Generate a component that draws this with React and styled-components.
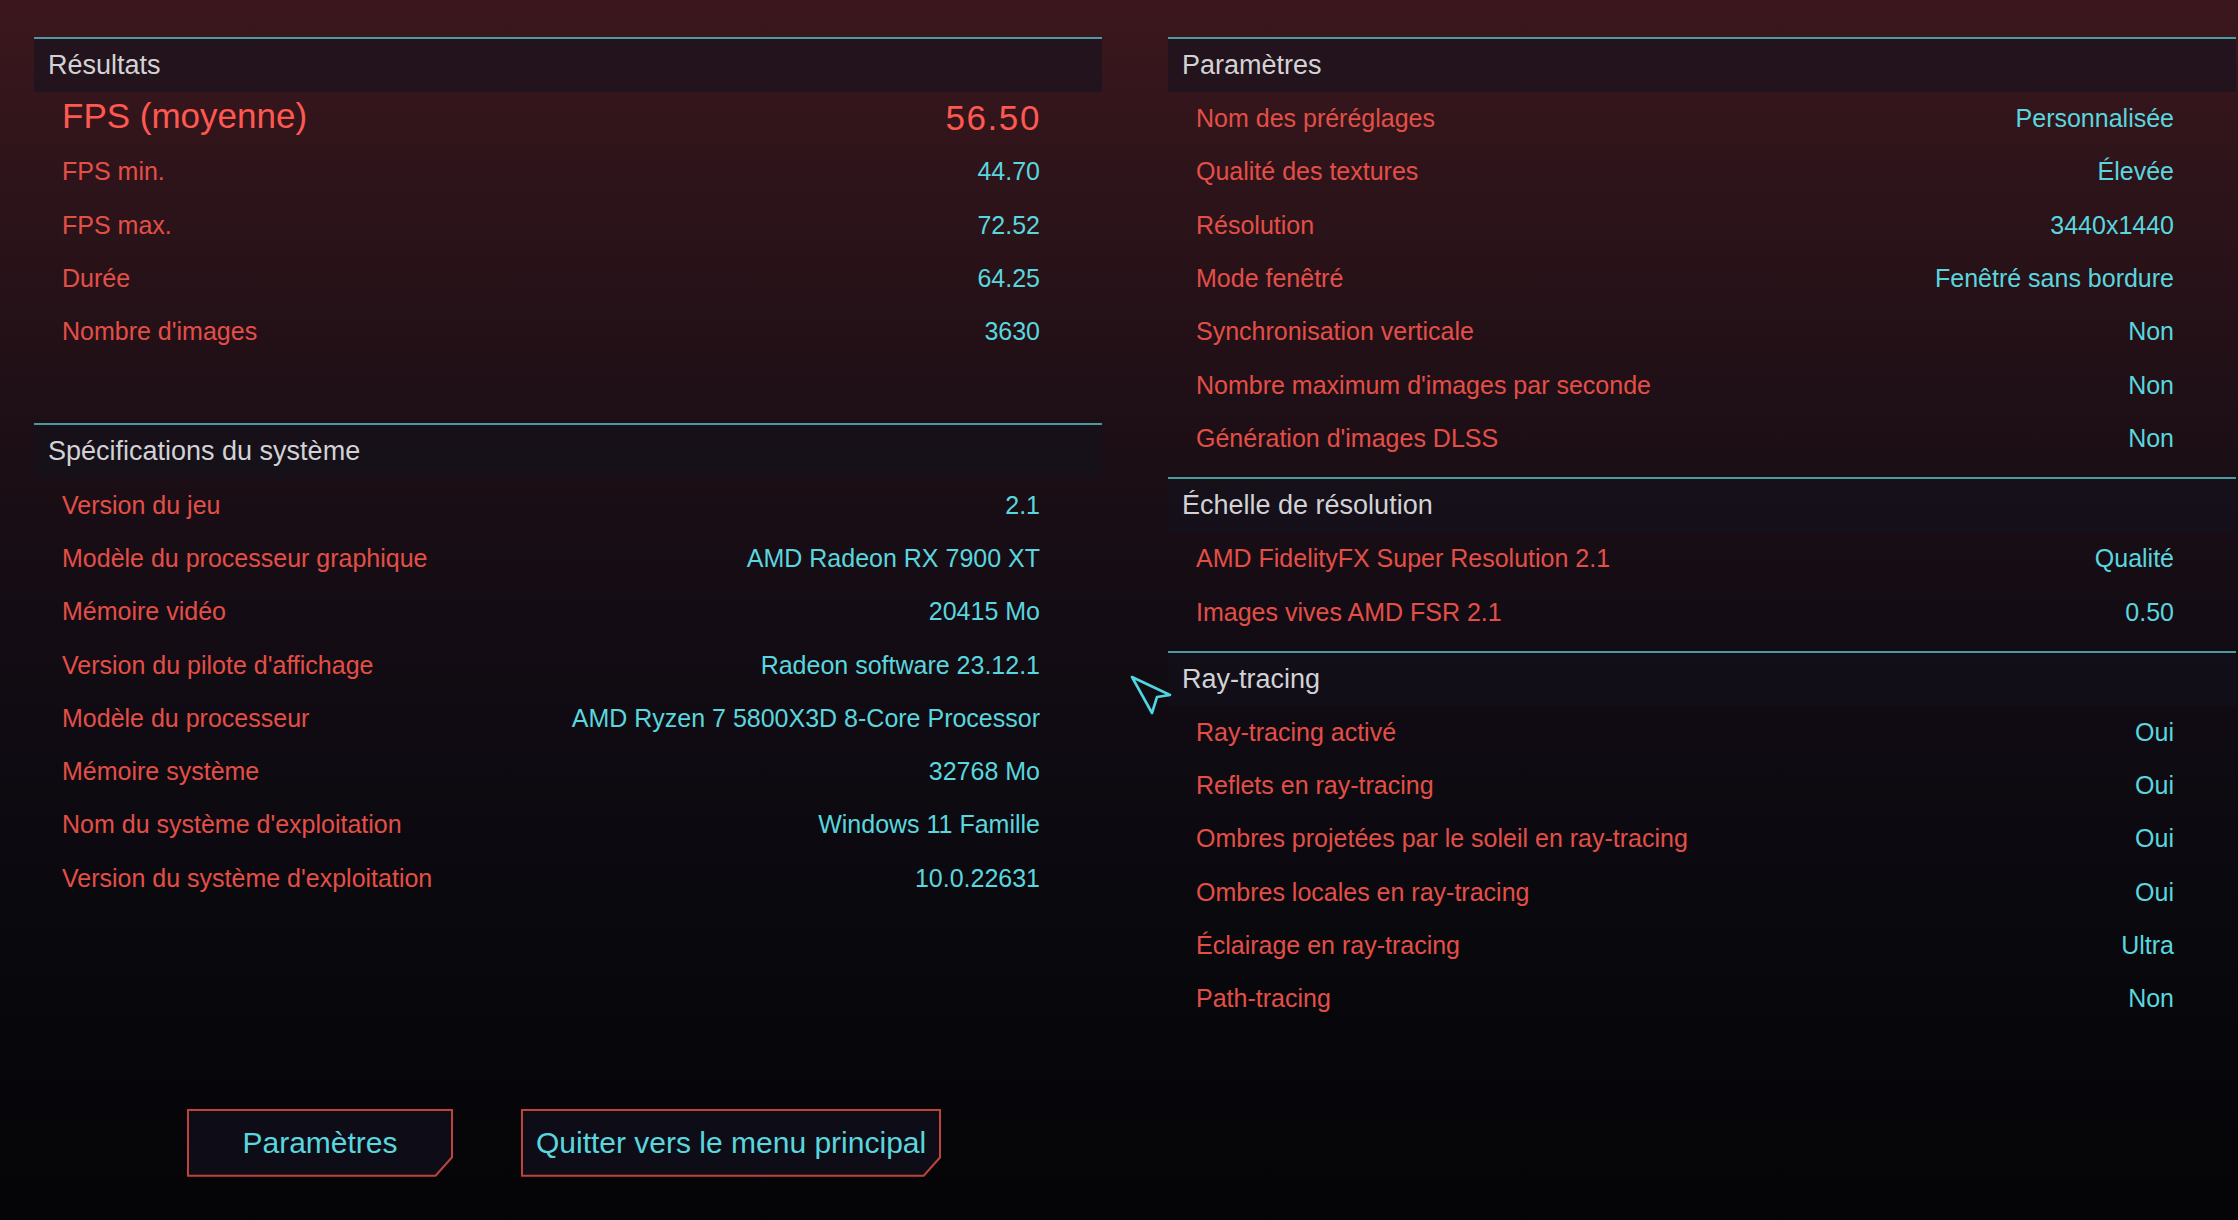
import React from "react";
import styled, { createGlobalStyle } from "styled-components";

const GlobalStyle = createGlobalStyle`
  html, body {
    margin: 0;
    padding: 0;
    width: 2238px;
    height: 1220px;
    overflow: hidden;
    background: linear-gradient(180deg, #3b171d 0%, #2e141a 14%, #1f0f16 33%, #140c14 50%, #0c0a10 68%, #07070b 85%, #050508 100%);
    font-family: "Liberation Sans", Arial, sans-serif;
  }
  * { box-sizing: border-box; }
`;

const Page = styled.div`
  position: relative;
  width: 2238px;
  height: 1220px;
  padding: 37px 2px 0 34px;
  display: grid;
  grid-template-columns: 1068px 1068px;
  column-gap: 66px;
  align-items: start;
`;

const Column = styled.div`
  display: flex;
  flex-direction: column;
`;

const Section = styled.section`
  border-top: 2px solid #4a9aa0;
  padding-bottom: ${(p) => p.$pb || 0}px;
`;

const SectionHeader = styled.div`
  height: 53px;
  display: flex;
  align-items: center;
  padding-left: 14px;
  background: rgba(18, 18, 30, 0.55);
  color: #d2d2d5;
  font-size: 27px;
`;

const Row = styled.div`
  height: 53.3px;
  display: flex;
  align-items: center;
  justify-content: space-between;
  padding: 0 62px 0 28px;
  font-size: 25px;
`;

const Label = styled.span`
  color: ${(p) => (p.$big ? "#ff5850" : "#e34f47")};
  font-size: ${(p) => (p.$big ? "35px" : "inherit")};
  ${(p) => (p.$big ? "margin-top: -6px;" : "")}
`;

const Value = styled.span`
  color: ${(p) => (p.$big ? "#ff5850" : "#5ad6df")};
  font-size: ${(p) => (p.$big ? "35px" : "inherit")};
  letter-spacing: ${(p) => (p.$big ? "1.6px" : "0")};
  ${(p) => (p.$big ? "margin-top: -2px; margin-right: -1px;" : "")}
`;

const Buttons = styled.div`
  display: flex;
  gap: 68px;
  margin-top: 204px;
  padding-left: 153px;
`;

const ButtonFrame = styled.div`
  padding: 2px;
  background: #bd433b;
  clip-path: polygon(0 0, 100% 0, 100% calc(100% - 19px), calc(100% - 17px) 100%, 0 100%);
`;

const Button = styled.button`
  height: 64px;
  min-width: ${(p) => p.$minWidth || 0}px;
  padding: 0 13px;
  border: none;
  background: #0e0d17;
  color: #5ad6df;
  font-family: "Liberation Sans", Arial, sans-serif;
  font-size: 30px;
  display: flex;
  align-items: center;
  justify-content: center;
  clip-path: polygon(0 0, 100% 0, 100% calc(100% - 18px), calc(100% - 16px) 100%, 0 100%);
  cursor: pointer;
`;

const Cursor = styled.svg`
  position: absolute;
  left: 1126px;
  top: 671px;
  width: 52px;
  height: 50px;
  overflow: visible;
`;

const results = [
  ["FPS min.", "44.70"],
  ["FPS max.", "72.52"],
  ["Durée", "64.25"],
  ["Nombre d'images", "3630"],
];

const specs = [
  ["Version du jeu", "2.1"],
  ["Modèle du processeur graphique", "AMD Radeon RX 7900 XT"],
  ["Mémoire vidéo", "20415 Mo"],
  ["Version du pilote d'affichage", "Radeon software 23.12.1"],
  ["Modèle du processeur", "AMD Ryzen 7 5800X3D 8-Core Processor"],
  ["Mémoire système", "32768 Mo"],
  ["Nom du système d'exploitation", "Windows 11 Famille"],
  ["Version du système d'exploitation", "10.0.22631"],
];

const params = [
  ["Nom des préréglages", "Personnalisée"],
  ["Qualité des textures", "Élevée"],
  ["Résolution", "3440x1440"],
  ["Mode fenêtré", "Fenêtré sans bordure"],
  ["Synchronisation verticale", "Non"],
  ["Nombre maximum d'images par seconde", "Non"],
  ["Génération d'images DLSS", "Non"],
];

const scaling = [
  ["AMD FidelityFX Super Resolution 2.1", "Qualité"],
  ["Images vives AMD FSR 2.1", "0.50"],
];

const rayTracing = [
  ["Ray-tracing activé", "Oui"],
  ["Reflets en ray-tracing", "Oui"],
  ["Ombres projetées par le soleil en ray-tracing", "Oui"],
  ["Ombres locales en ray-tracing", "Oui"],
  ["Éclairage en ray-tracing", "Ultra"],
  ["Path-tracing", "Non"],
];

const Rows = ({ items }) =>
  items.map(([label, value]) => (
    <Row key={label}>
      <Label>{label}</Label>
      <Value>{value}</Value>
    </Row>
  ));

export default function App() {
  return (
    <>
      <GlobalStyle />
      <Page>
        <Column>
          <Section $pb={65}>
            <SectionHeader>Résultats</SectionHeader>
            <Row>
              <Label $big>FPS (moyenne)</Label>
              <Value $big>56.50</Value>
            </Row>
            <Rows items={results} />
          </Section>
          <Section>
            <SectionHeader>Spécifications du système</SectionHeader>
            <Rows items={specs} />
          </Section>
          <Buttons>
            <ButtonFrame>
              <Button $minWidth={262}>Paramètres</Button>
            </ButtonFrame>
            <ButtonFrame>
              <Button>Quitter vers le menu principal</Button>
            </ButtonFrame>
          </Buttons>
        </Column>
        <Column>
          <Section $pb={12}>
            <SectionHeader>Paramètres</SectionHeader>
            <Rows items={params} />
          </Section>
          <Section $pb={12}>
            <SectionHeader>Échelle de résolution</SectionHeader>
            <Rows items={scaling} />
          </Section>
          <Section>
            <SectionHeader>Ray-tracing</SectionHeader>
            <Rows items={rayTracing} />
          </Section>
        </Column>
        <Cursor viewBox="0 0 52 50">
          <polygon
            points="6,6 44,24 31,26 26,42"
            fill="none"
            stroke="#4fd6e0"
            strokeWidth="2.6"
            strokeLinejoin="round"
          />
        </Cursor>
      </Page>
    </>
  );
}
